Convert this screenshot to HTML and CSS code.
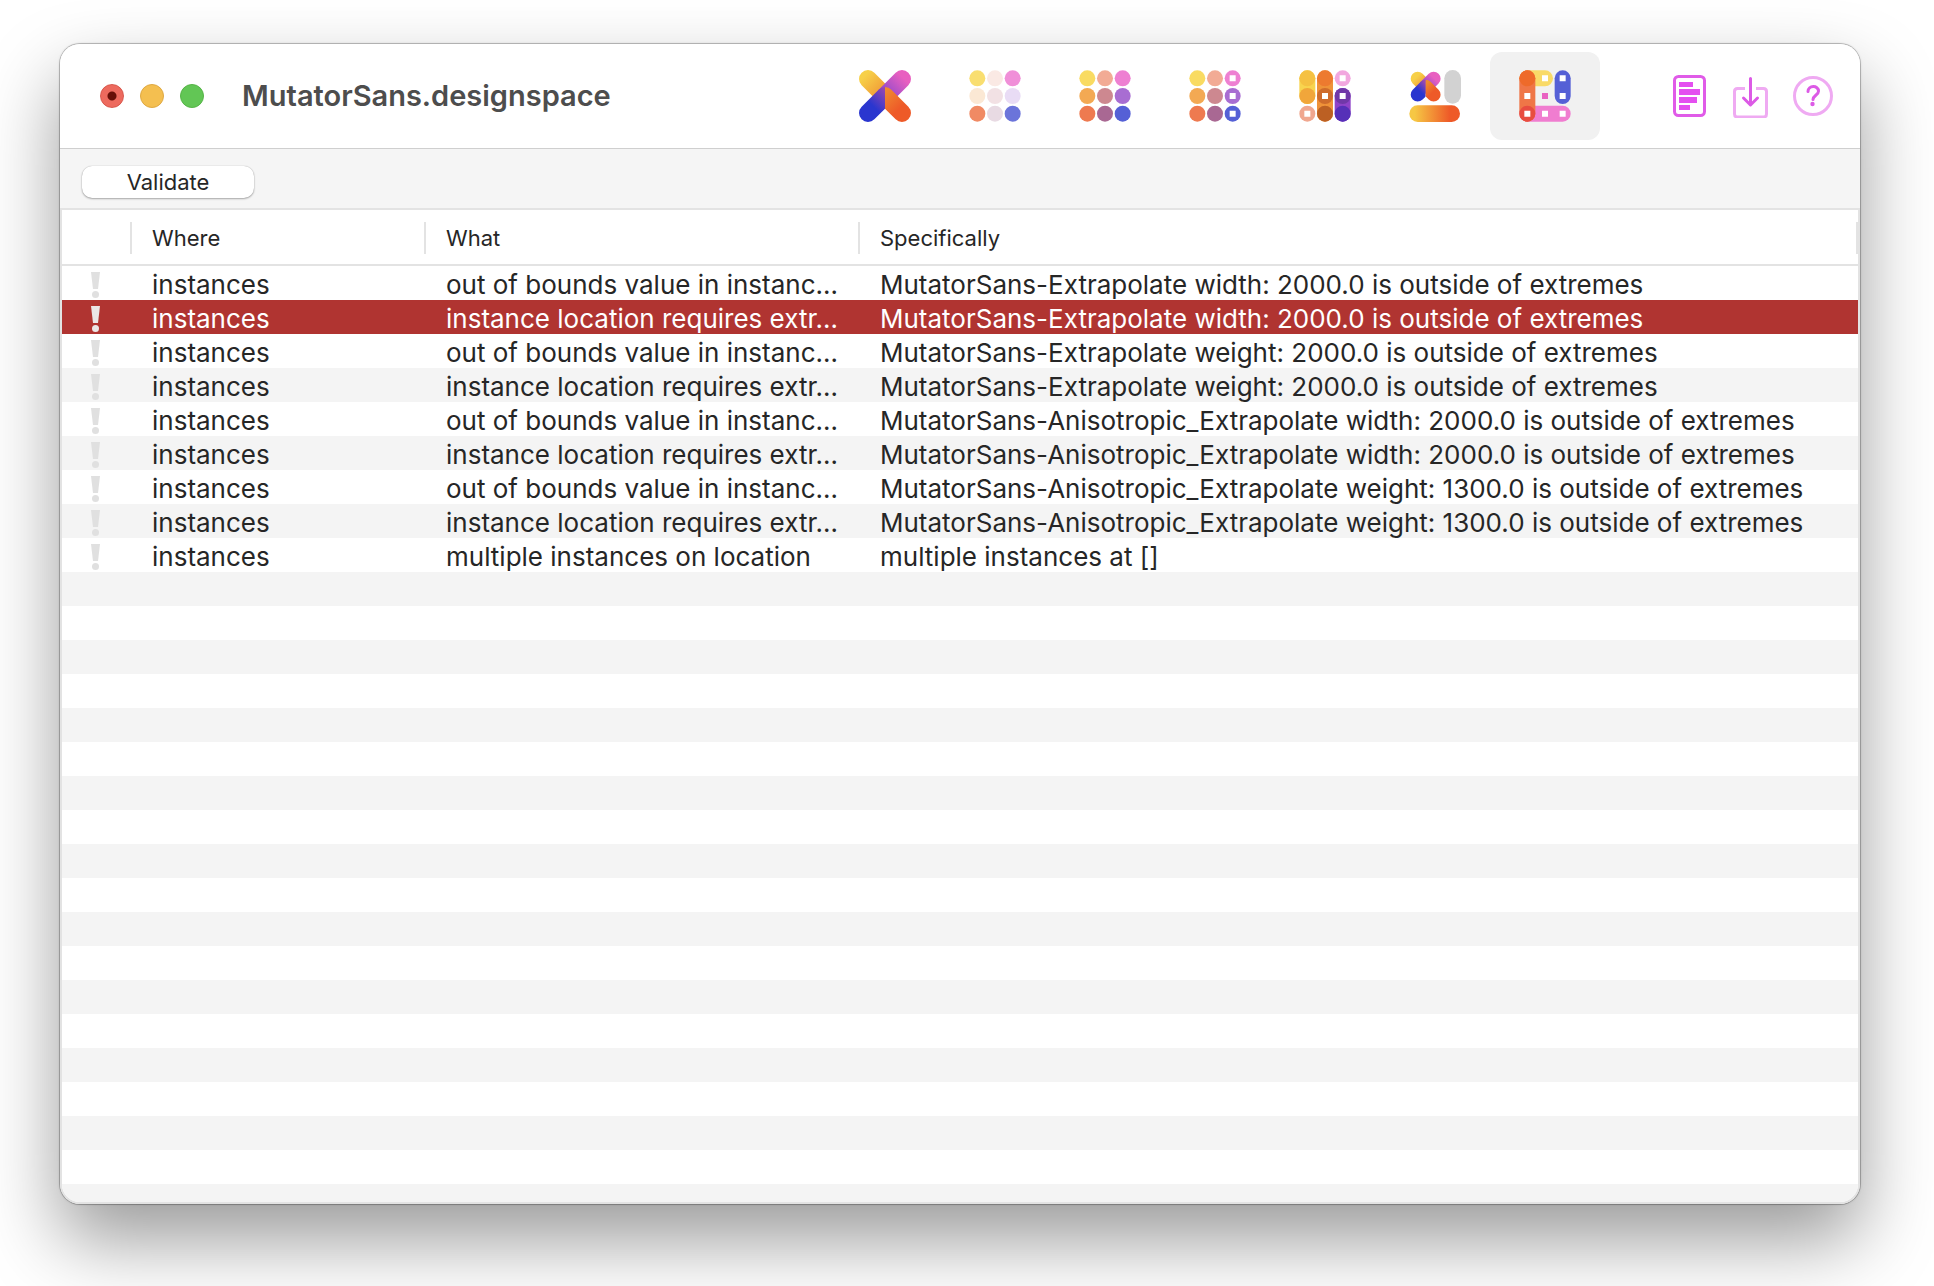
FILE: index.html
```html
<!DOCTYPE html>
<html lang="en">
<head>
<meta charset="utf-8">
<title>MutatorSans.designspace</title>
<link rel="stylesheet" href="styles.css">
</head>
<body>
<svg class="defs" width="0" height="0" aria-hidden="true">
  <defs>
    <linearGradient id="gold" gradientUnits="userSpaceOnUse" x1="10" y1="10" x2="85" y2="85"><stop offset="0.1" stop-color="#f7d048"/><stop offset="1" stop-color="#ee8a30"/></linearGradient>
    <linearGradient id="pink" gradientUnits="userSpaceOnUse" x1="146" y1="10" x2="78" y2="78"><stop offset="0.2" stop-color="#e85fc0"/><stop offset="1" stop-color="#8a48cc"/></linearGradient>
    <linearGradient id="blue" gradientUnits="userSpaceOnUse" x1="26" y1="131" x2="90" y2="67"><stop offset="0.3" stop-color="#2a36cf"/><stop offset="1" stop-color="#9a48b0"/></linearGradient>
    <linearGradient id="flame" gradientUnits="userSpaceOnUse" x1="130" y1="131" x2="70" y2="70"><stop offset="0.2" stop-color="#ee5a28"/><stop offset="1" stop-color="#ef8a30"/></linearGradient>
    <linearGradient id="bar" gradientUnits="userSpaceOnUse" x1="2" y1="0" x2="152" y2="0"><stop offset="0.1" stop-color="#f6c744"/><stop offset="0.8" stop-color="#ee5a28"/></linearGradient>
    <clipPath id="left"><path d="M-30-30H78V190H-30z"/></clipPath>
    <clipPath id="right"><path d="M78-30H190V190H78z"/></clipPath>
    <g id="cross" fill="none" stroke-linecap="round">
      <path d="M27 27 78 78" stroke="url(#gold)"/>
      <path d="M129 27 78 78" stroke="url(#pink)"/>
      <path d="M27 129 78 78" stroke="url(#blue)" clip-path="url(#left)"/>
      <path d="M129 129 78 78" stroke="url(#flame)" clip-path="url(#right)"/>
    </g>
    <g id="dots">
      <circle cx="25" cy="25" r="24" fill="#f9db62"/><circle cx="78" cy="25" r="24" fill="#f2ab95"/>
      <circle cx="25" cy="78" r="24" fill="#f3a953"/><circle cx="78" cy="78" r="24" fill="#cd8890"/>
      <circle cx="25" cy="131" r="24" fill="#ee7a50"/><circle cx="78" cy="131" r="24" fill="#a96893"/>
      <circle cx="131" cy="25" r="24" fill="#ee80d2"/><circle cx="131" cy="78" r="24" fill="#a86dd2"/><circle cx="131" cy="131" r="24" fill="#5560d6"/>
    </g>
    <path id="hole" d="M-9-9H9V9H-9z"/>
    <g id="mark"><path d="M0 0H9L7 17H2z"/><circle cx="4.500" cy="22.500" r="3.500"/></g>
  </defs>
</svg>

<main class="window">
  <header class="titlebar">
    <div class="lights">
      <button class="light close" aria-label="Close"></button>
      <button class="light minimize" aria-label="Minimize"></button>
      <button class="light expand" aria-label="Zoom"></button>
    </div>
    <h1 class="title">MutatorSans.designspace</h1>
    <nav class="tabs" aria-label="Sections">
      <button class="tab" aria-label="Designspace"><svg viewBox="0 0 156 156"><use href="#cross" stroke-width="54"/></svg></button>
      <button class="tab" aria-label="Axes"><svg viewBox="0 0 156 156">
        <circle cx="25" cy="25" r="24" fill="#f9de70"/><circle cx="78" cy="25" r="24" fill="#fae9e4"/><circle cx="131" cy="25" r="24" fill="#f08fd8"/>
        <circle cx="25" cy="78" r="24" fill="#fbe8d4"/><circle cx="78" cy="78" r="24" fill="#f2e1e4"/><circle cx="131" cy="78" r="24" fill="#e9dcf5"/>
        <circle cx="25" cy="131" r="24" fill="#f08a64"/><circle cx="78" cy="131" r="24" fill="#e8dae3"/><circle cx="131" cy="131" r="24" fill="#6b74da"/></svg></button>
      <button class="tab" aria-label="Sources"><svg viewBox="0 0 156 156"><use href="#dots"/></svg></button>
      <button class="tab" aria-label="Instances"><svg viewBox="0 0 156 156"><use href="#dots"/>
        <g fill="#fff"><use href="#hole" x="131" y="25"/><use href="#hole" x="131" y="78"/><use href="#hole" x="131" y="131"/></g></svg></button>
      <button class="tab" aria-label="Rules"><svg viewBox="0 0 156 156">
        <g fill="none" stroke-width="48" stroke-linecap="round"><path d="M25 25V78" stroke="#f8d44e"/><path d="M78 25V131" stroke="#ef9238"/><path d="M131 78V131" stroke="#8f42c8"/></g>
        <circle cx="25" cy="25" r="24" fill="#f5c142"/><circle cx="25" cy="78" r="24" fill="#f1a63a"/><circle cx="25" cy="131" r="24" fill="#f0a78f"/>
        <circle cx="78" cy="25" r="24" fill="#ed7a2f"/><circle cx="78" cy="78" r="24" fill="#cf6c2c"/><circle cx="78" cy="131" r="24" fill="#bc6023"/>
        <circle cx="131" cy="25" r="24" fill="#f2a7df"/><circle cx="131" cy="78" r="24" fill="#7038a8"/><circle cx="131" cy="131" r="24" fill="#5630b8"/>
        <g fill="#fff"><use href="#hole" x="25" y="131"/><use href="#hole" x="78" y="78"/><use href="#hole" x="131" y="25"/><use href="#hole" x="131" y="78"/></g></svg></button>
      <button class="tab" aria-label="Location labels"><svg viewBox="0 0 156 156">
        <use href="#cross" stroke-width="89" transform="translate(13.300 13.300) scale(0.470)"/>
        <path d="M131 25V76" stroke="#d2d2d2" stroke-width="50" stroke-linecap="round"/>
        <rect x="1" y="106" width="152" height="50" rx="25" fill="url(#bar)"/></svg></button>
      <button class="tab selected" aria-label="Problems" aria-pressed="true"><svg viewBox="0 0 156 156">
        <g fill="none" stroke-width="48" stroke-linecap="round"><path d="M25 25H78" stroke="#f9da68"/><path d="M25 131H131" stroke="#f07dd0"/><path d="M131 25V78" stroke="#5560d6"/><path d="M25 25V131" stroke="#ef7647"/></g>
        <circle cx="25" cy="25" r="24" fill="#ee6a2a"/><circle cx="25" cy="131" r="24" fill="#e84d40"/>
        <g fill="#fff"><use href="#hole" x="78" y="25"/><use href="#hole" x="131" y="25"/><use href="#hole" x="25" y="78"/><use href="#hole" x="131" y="78"/><use href="#hole" x="25" y="131"/><use href="#hole" x="78" y="131"/><use href="#hole" x="131" y="131"/></g>
        <use href="#hole" x="78" y="78" fill="#e963c2"/></svg></button>
    </nav>
    <div class="actions">
      <button class="action" aria-label="Notes"><svg viewBox="0 0 44 44">
        <rect x="7.500" y="2.500" width="30" height="39" rx="4" fill="none" stroke="#e05be8" stroke-width="3"/>
        <path d="M12 8H26V13H12zM12 15H33V21H12zM12 23H30V29H12zM12 31H23V36H12z" fill="#e44ff0"/></svg></button>
      <button class="action" aria-label="Import"><svg viewBox="0 0 44 44" fill="none" stroke-width="3" stroke-linecap="round" stroke-linejoin="round">
        <path d="M16 14.500H8.500Q5.500 14.500 5.500 17.500V40Q5.500 43 8.500 43H34.500Q37.500 43 37.500 40V17.500Q37.500 14.500 34.500 14.500H27" stroke="#efaaf2" stroke-linecap="butt"/>
        <path d="M21.500 4.500V30M14.500 24 21.500 31 28.500 24" stroke="#dc5ae6"/></svg></button>
      <button class="action" aria-label="Help"><svg viewBox="0 0 44 44" fill="none" stroke-width="3">
        <circle cx="22" cy="22" r="18.500" stroke="#efaaf2"/>
        <path d="M17 17.500C17 11 27.500 11 27.500 17.200C27.500 21 22 21.500 22 25.500" stroke="#dc5ae6" stroke-linecap="round"/>
        <circle cx="21.500" cy="30" r="2.200" fill="#dc5ae6"/></svg></button>
    </div>
  </header>

  <div class="toolbar"><button class="validate">Validate</button></div>

  <section class="report">
    <table class="problems">
      <colgroup><col class="col-mark"><col class="col-where"><col class="col-what"><col></colgroup>
      <thead>
        <tr><th><div class="head"></div></th><th><div class="head">Where</div></th><th><div class="head">What</div></th><th><div class="head">Specifically</div></th></tr>
      </thead>
      <tbody>
        <tr><td><svg class="mark"><use href="#mark"/></svg></td><td>instances</td><td>out of bounds value in instanc…</td><td>MutatorSans-Extrapolate width: 2000.0 is outside of extremes</td></tr>
        <tr class="current"><td><svg class="mark"><use href="#mark"/></svg></td><td>instances</td><td>instance location requires extr…</td><td>MutatorSans-Extrapolate width: 2000.0 is outside of extremes</td></tr>
        <tr><td><svg class="mark"><use href="#mark"/></svg></td><td>instances</td><td>out of bounds value in instanc…</td><td>MutatorSans-Extrapolate weight: 2000.0 is outside of extremes</td></tr>
        <tr><td><svg class="mark"><use href="#mark"/></svg></td><td>instances</td><td>instance location requires extr…</td><td>MutatorSans-Extrapolate weight: 2000.0 is outside of extremes</td></tr>
        <tr><td><svg class="mark"><use href="#mark"/></svg></td><td>instances</td><td>out of bounds value in instanc…</td><td>MutatorSans-Anisotropic_Extrapolate width: 2000.0 is outside of extremes</td></tr>
        <tr><td><svg class="mark"><use href="#mark"/></svg></td><td>instances</td><td>instance location requires extr…</td><td>MutatorSans-Anisotropic_Extrapolate width: 2000.0 is outside of extremes</td></tr>
        <tr><td><svg class="mark"><use href="#mark"/></svg></td><td>instances</td><td>out of bounds value in instanc…</td><td>MutatorSans-Anisotropic_Extrapolate weight: 1300.0 is outside of extremes</td></tr>
        <tr><td><svg class="mark"><use href="#mark"/></svg></td><td>instances</td><td>instance location requires extr…</td><td>MutatorSans-Anisotropic_Extrapolate weight: 1300.0 is outside of extremes</td></tr>
        <tr><td><svg class="mark"><use href="#mark"/></svg></td><td>instances</td><td>multiple instances on location</td><td>multiple instances at []</td></tr>
      </tbody>
    </table>
    <div class="stripes"></div>
  </section>
</main>
</body>
</html>
```
FILE: styles.css
```css
* {
  box-sizing: border-box;
}

body {
  margin: 0;
  min-height: 100vh;
  padding: 44px 74px 82px 60px;
  display: flex;
  overflow-x: hidden;
  background: #fff;
  color: #262626;
  font-family: Inter, "Liberation Sans", sans-serif;
}

button {
  margin: 0;
  padding: 0;
  border: 0;
  background: none;
  color: inherit;
  font: inherit;
}

.defs {
  position: absolute;
}

.window {
  flex: 1;
  min-width: 0;
  display: flex;
  flex-direction: column;
  overflow: hidden;
  border-radius: 20px;
  background: #f5f5f5;
  box-shadow: 0 0 0 1px rgba(0, 0, 0, 0.2), 0 0 3px rgba(0, 0, 0, 0.2), 0 36px 76px rgba(0, 0, 0, 0.4);
}

.titlebar {
  height: 105px;
  padding: 0 25px 0 40px;
  display: flex;
  align-items: center;
  border-bottom: 1px solid #cfcfcf;
  background: #fff;
}

.lights {
  display: flex;
  gap: 16px;
}

.light {
  width: 24px;
  height: 24px;
  border: 1px solid #d8574c;
  border-radius: 50%;
}

.close {
  background: radial-gradient(circle, #690f08 4px, #ed6a5e 5px);
}

.minimize {
  border-color: #dfa943;
  background: #f4bf50;
}

.expand {
  border-color: #56b447;
  background: #62c655;
}

.title {
  margin: 0 auto 0 38px;
  color: #4d4d4d;
  font-size: 29px;
  font-weight: 600;
  line-height: 40px;
}

.tabs {
  display: flex;
  margin-right: 67px;
}

.tab {
  width: 110px;
  height: 88px;
  display: grid;
  place-items: center;
  border-radius: 12px;
}

.tab > svg {
  width: 52px;
  height: 52px;
}

.tab.selected {
  background: #f1f1f1;
}

.actions {
  display: flex;
  gap: 18px;
}

.action svg {
  display: block;
  width: 44px;
  height: 44px;
}

.toolbar {
  padding: 17px 22px 10px;
}

.validate {
  display: block;
  width: 172px;
  height: 32px;
  border-radius: 10px;
  background: #fff;
  box-shadow: 0 0 1px rgba(0, 0, 0, 0.3), 0 1px 2px rgba(0, 0, 0, 0.3);
  font-size: 22px;
  line-height: 32px;
}

.report {
  flex: 1;
  display: flex;
  flex-direction: column;
  border: 2px solid #e3e3e3;
  border-radius: 0 0 20px 20px;
  background: #fff;
}

.problems {
  width: 100%;
  table-layout: fixed;
  border-collapse: separate;
  border-spacing: 0;
}

.col-mark {
  width: 70px;
}

.col-where {
  width: 294px;
}

.col-what {
  width: 434px;
}

th {
  padding: 12px 0 10px;
  border-bottom: 2px solid #e3e3e3;
  font-size: 22px;
  font-weight: 400;
  text-align: left;
}

.head {
  height: 32px;
  padding-left: 20px;
  border-right: 2px solid #e3e3e3;
  line-height: 32px;
}

td {
  height: 34px;
  padding: 4px 0 0 20px;
  font-size: 26px;
  line-height: 30px;
  white-space: nowrap;
}

td:first-child {
  padding: 4px 0 0 29px;
}

tbody tr:nth-child(even) {
  background: #f4f4f4;
}

tbody .current:nth-child(even) {
  background: #b03431;
  color: #fff;
}

.mark {
  display: block;
  width: 9px;
  height: 26px;
  fill: #e0e0e0;
}

.current .mark {
  fill: #ebe6e6;
}

.stripes {
  flex: 1;
  border-radius: 0 0 18px 18px;
  background: repeating-linear-gradient(#f4f4f4 0 34px, #fff 34px 68px);
}
```
